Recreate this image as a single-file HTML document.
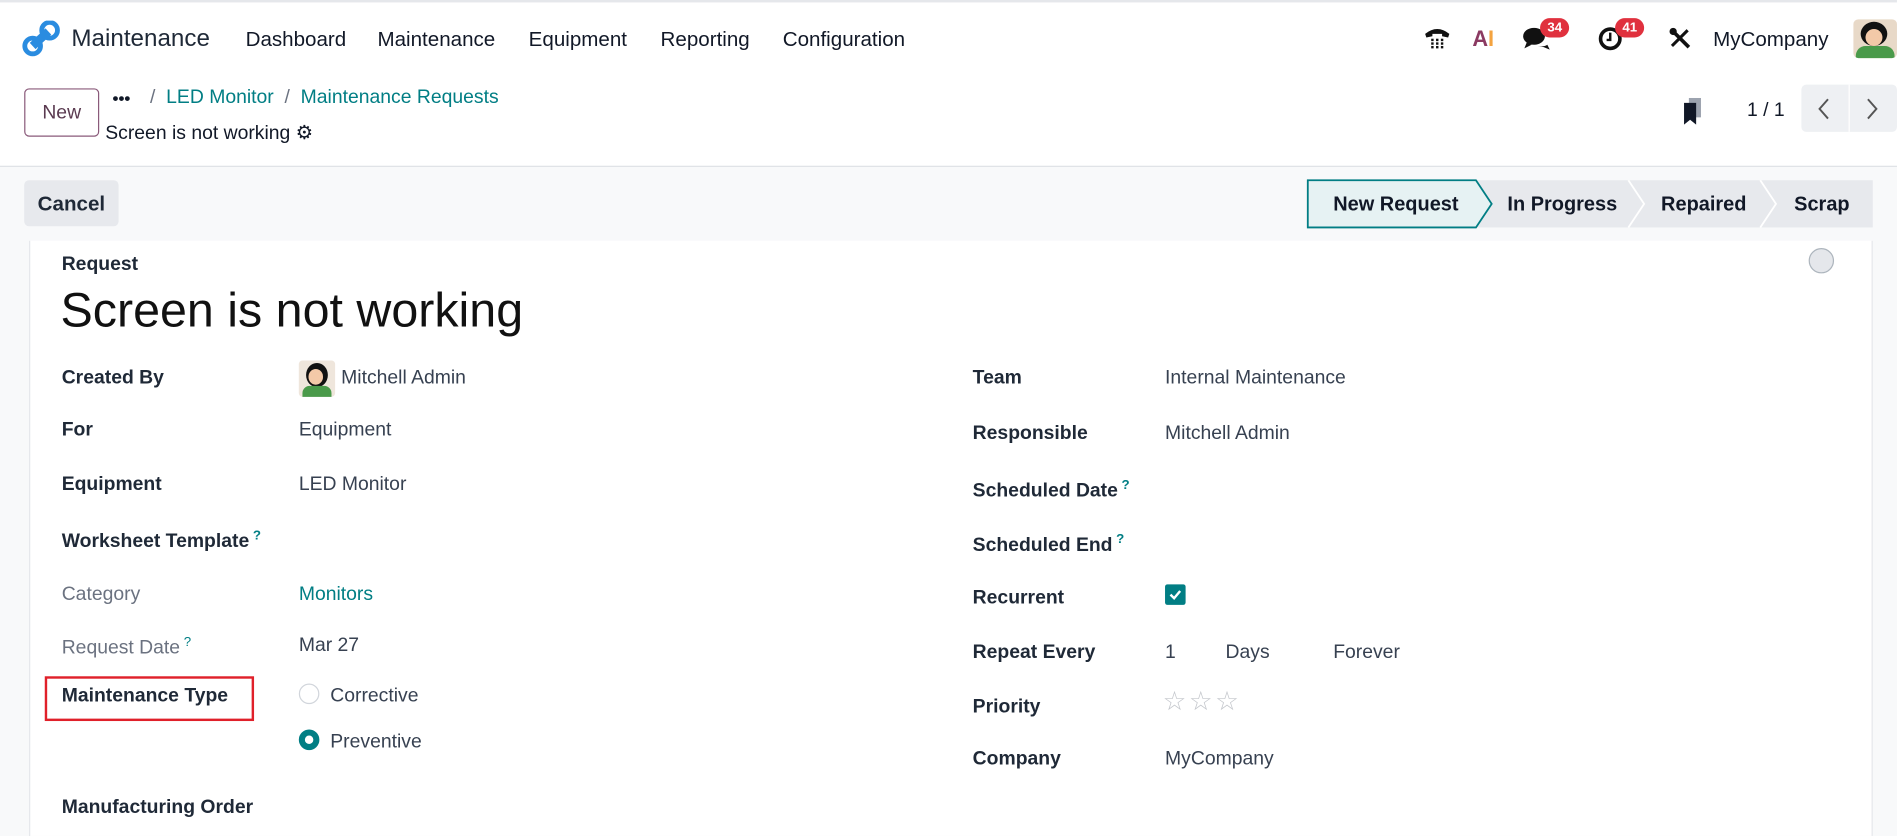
<!DOCTYPE html>
<html><head><meta charset="utf-8"><style>
*{box-sizing:border-box;margin:0;padding:0}
html,body{width:1897px;height:836px;overflow:hidden;background:#fff}
#w{position:absolute;left:0;top:0;width:1568px;height:691px;transform:scale(1.2098);transform-origin:0 0;font-family:"Liberation Sans",sans-serif;color:#111827}
.a{position:absolute;white-space:nowrap}
.nav{font-size:17px;top:23px}
.lab{font-size:16px;font-weight:bold;color:#1f2937;margin-top:2px}
.val{font-size:16px;color:#374151;margin-top:2px}
.gl{color:#6b7280;font-weight:normal}
.q{color:#017e84;font-size:11px;vertical-align:super;margin-left:3px}
.badge{position:absolute;background:#e0313e;color:#fff;font-size:11px;border-radius:9px;padding:2px 6px;font-weight:bold}
.st{font-size:16.5px;font-weight:bold;top:160px}
</style></head><body><div id="w">
<div class="a" style="left:0;top:0;width:1568px;height:2px;background:#e5e7eb"></div>
<svg class="a" style="left:18px;top:17px" width="32" height="30" viewBox="0 0 32 30"><line x1="9" y1="21" x2="22" y2="9" stroke="#2a8ce0" stroke-width="7"/><circle cx="9" cy="21" r="6.5" fill="none" stroke="#2a8ce0" stroke-width="4"/><circle cx="23" cy="8" r="6.5" fill="none" stroke="#2a8ce0" stroke-width="4"/></svg>
<div class="a" style="left:59px;top:21px;font-size:20px;color:#1f2937">Maintenance</div>
<div class="a nav" style="left:203px">Dashboard</div>
<div class="a nav" style="left:312px">Maintenance</div>
<div class="a nav" style="left:437px">Equipment</div>
<div class="a nav" style="left:546px">Reporting</div>
<div class="a nav" style="left:647px">Configuration</div>
<svg class="a" style="left:1176px;top:20px" width="24" height="22"><path d="M2 8q10-8 20 0l-1 3-5-1v-2h-8v2l-5 1z" fill="#111"/><g fill="#111"><rect x="7" y="12" width="2" height="2"/><rect x="11" y="12" width="2" height="2"/><rect x="15" y="12" width="2" height="2"/><rect x="7" y="15" width="2" height="2"/><rect x="11" y="15" width="2" height="2"/><rect x="15" y="15" width="2" height="2"/><rect x="7" y="18" width="2" height="2"/><rect x="11" y="18" width="2" height="2"/><rect x="15" y="18" width="2" height="2"/></g></svg>
<div class="a" style="left:1217px;top:22px;font-size:18px;font-weight:bold;color:#8b3a62">A<span style="color:#f4a340">I</span></div>
<svg class="a" style="left:1258px;top:21px" width="24" height="22"><ellipse cx="10" cy="9" rx="9" ry="7" fill="#111"/><path d="M4 14l-2 5 6-3z" fill="#111"/><path d="M13 17q5 1 8-1l2 4-5-2" fill="#111"/></svg>
<div class="badge" style="left:1273px;top:15px">34</div>
<svg class="a" style="left:1321px;top:22px" width="20" height="20"><circle cx="10" cy="10" r="8" fill="none" stroke="#111" stroke-width="3"/><path d="M10 5v6h-3" stroke="#111" stroke-width="2" fill="none"/></svg>
<div class="badge" style="left:1335px;top:15px">41</div>
<svg class="a" style="left:1379px;top:22px" width="20" height="20"><path d="M5 5l12 12" stroke="#111" stroke-width="3"/><path d="M16 3l-13 13" stroke="#111" stroke-width="2.5"/><circle cx="4" cy="4" r="3" fill="#111"/></svg>
<div class="a" style="left:1416px;top:23px;font-size:17px">MyCompany</div>
<div class="a" style="left:1532px;top:16px;width:36px;height:32px;background:#e8d9c8;border-radius:4px;overflow:hidden"><div style="position:absolute;left:6px;top:2px;width:22px;height:20px;background:#111;border-radius:50%"></div><div style="position:absolute;left:10px;top:8px;width:14px;height:14px;background:#f3c9a8;border-radius:50%"></div><div style="position:absolute;left:2px;top:22px;width:32px;height:12px;background:#4a9a4a;border-radius:8px 8px 0 0"></div></div>

<div class="a" style="left:20px;top:73px;width:62px;height:40px;border:1px solid #8a5a7a;border-radius:4px;font-size:16px;color:#5a3a50;text-align:center;line-height:40px">New</div>
<div class="a" style="left:93px;top:73px;font-size:14px;font-weight:bold">•••</div>
<div class="a" style="left:124px;top:72px;font-size:16px;color:#6b7280">/ &nbsp;<span style="color:#017e84">LED Monitor</span> &nbsp;/ &nbsp;<span style="color:#017e84">Maintenance Requests</span></div>
<div class="a" style="left:87px;top:100px;font-size:16px">Screen is not working <span style="font-size:16px">⚙</span></div>
<svg class="a" style="left:1390px;top:80px" width="18" height="24"><rect x="6" y="1" width="10" height="16" fill="#9ca3af"/><path d="M2 5h10v18l-5-4-5 4z" fill="#111827"/></svg>
<div class="a" style="left:1444px;top:83px;font-size:16px">1 / 1</div>
<div class="a" style="left:1489px;top:70px;width:79px;height:39px;background:#eef0f3;border-radius:4px"></div>
<div class="a" style="left:1528px;top:70px;width:1px;height:39px;background:#fff"></div>
<svg class="a" style="left:1500px;top:80px" width="16" height="20"><path d="M11 2L4 10l7 8" stroke="#555" stroke-width="1.6" fill="none"/></svg>
<svg class="a" style="left:1540px;top:80px" width="16" height="20"><path d="M4 2l7 8-7 8" stroke="#555" stroke-width="1.6" fill="none"/></svg>

<div class="a" style="left:0;top:137px;width:1568px;height:554px;background:#f8f9fa;border-top:1px solid #dee2e6"></div>
<div class="a" style="left:20px;top:149px;width:78px;height:38px;background:#e7e9ed;border-radius:4px;font-size:17px;font-weight:bold;text-align:center;line-height:40px;color:#1f2937">Cancel</div>
<svg class="a" style="left:1080px;top:148px" width="470" height="41">
<rect x="0" y="1" width="468" height="39" fill="#e7e9ed"/>
<path d="M1 1H140L153 20.5L140 40H1Z" fill="#e6f2f3" stroke="#017e84" stroke-width="1.5"/>
<path d="M266 1L279 20.5L266 40M375 1L388 20.5L375 40" stroke="#fff" stroke-width="1.5" fill="none"/>
</svg>
<div class="a st" style="left:1102px">New Request</div>
<div class="a st" style="left:1246px">In Progress</div>
<div class="a st" style="left:1373px">Repaired</div>
<div class="a st" style="left:1483px">Scrap</div>

<div class="a" style="left:24px;top:199px;width:1524px;height:492px;background:#fff;border-left:1px solid #e5e7eb;border-right:1px solid #e5e7eb"></div>
<div class="a" style="left:1495px;top:205px;width:21px;height:21px;border-radius:50%;background:#e5e7eb;border:1px solid #adb5bd"></div>
<div class="a lab" style="left:51px;top:208px">Request</div>
<div class="a" style="left:50px;top:235px;font-size:40px;color:#111">Screen is not working</div>

<div class="a lab" style="left:51px;top:302px">Created By</div>
<div class="a" style="left:247px;top:298px;width:30px;height:30px;background:#efe6dc;border-radius:3px;overflow:hidden"><div style="position:absolute;left:6px;top:2px;width:18px;height:20px;background:#111;border-radius:50%"></div><div style="position:absolute;left:8px;top:7px;width:12px;height:13px;background:#f3c9a8;border-radius:50%"></div><div style="position:absolute;left:3px;top:21px;width:24px;height:10px;background:#4a9a4a;border-radius:6px 6px 0 0"></div></div>
<div class="a val" style="left:282px;top:302px">Mitchell Admin</div>
<div class="a lab" style="left:51px;top:345px">For</div><div class="a val" style="left:247px;top:345px">Equipment</div>
<div class="a lab" style="left:51px;top:390px">Equipment</div><div class="a val" style="left:247px;top:390px">LED Monitor</div>
<div class="a lab" style="left:51px;top:435px">Worksheet Template<span class="q">?</span></div>
<div class="a lab gl" style="left:51px;top:481px">Category</div><div class="a val" style="left:247px;top:481px;color:#017e84">Monitors</div>
<div class="a lab gl" style="left:51px;top:523px">Request Date<span class="q">?</span></div><div class="a val" style="left:247px;top:523px">Mar 27</div>
<div class="a" style="left:37px;top:559px;width:173px;height:37px;border:2px solid #e0202a"></div>
<div class="a lab" style="left:51px;top:565px">Maintenance Type</div>
<div class="a" style="left:247px;top:565px;width:17px;height:17px;border-radius:50%;border:1px solid #d1d5db"></div>
<div class="a val" style="left:273px;top:565px">Corrective</div>
<div class="a" style="left:247px;top:603px;width:17px;height:17px;border-radius:50%;border:5px solid #017e84;background:#fff"></div>
<div class="a val" style="left:273px;top:603px">Preventive</div>
<div class="a lab" style="left:51px;top:657px">Manufacturing Order</div>

<div class="a lab" style="left:804px;top:302px">Team</div><div class="a val" style="left:963px;top:302px">Internal Maintenance</div>
<div class="a lab" style="left:804px;top:348px">Responsible</div><div class="a val" style="left:963px;top:348px">Mitchell Admin</div>
<div class="a lab" style="left:804px;top:393px">Scheduled Date<span class="q">?</span></div>
<div class="a lab" style="left:804px;top:438px">Scheduled End<span class="q">?</span></div>
<div class="a lab" style="left:804px;top:484px">Recurrent</div>
<div class="a" style="left:963px;top:483px;width:17px;height:17px;background:#017e84;border-radius:2px"><svg width="17" height="17"><path d="M4.5 8.5l3 3 5-6" stroke="#fff" stroke-width="2" fill="none"/></svg></div>
<div class="a lab" style="left:804px;top:529px">Repeat Every</div>
<div class="a val" style="left:963px;top:529px">1</div><div class="a val" style="left:1013px;top:529px">Days</div><div class="a val" style="left:1102px;top:529px">Forever</div>
<div class="a lab" style="left:804px;top:574px">Priority</div>
<div class="a" style="left:961px;top:567px;font-size:22px;color:#c4c7cc;letter-spacing:2px">☆☆☆</div>
<div class="a lab" style="left:804px;top:617px">Company</div><div class="a val" style="left:963px;top:617px">MyCompany</div>
</div></body></html>
